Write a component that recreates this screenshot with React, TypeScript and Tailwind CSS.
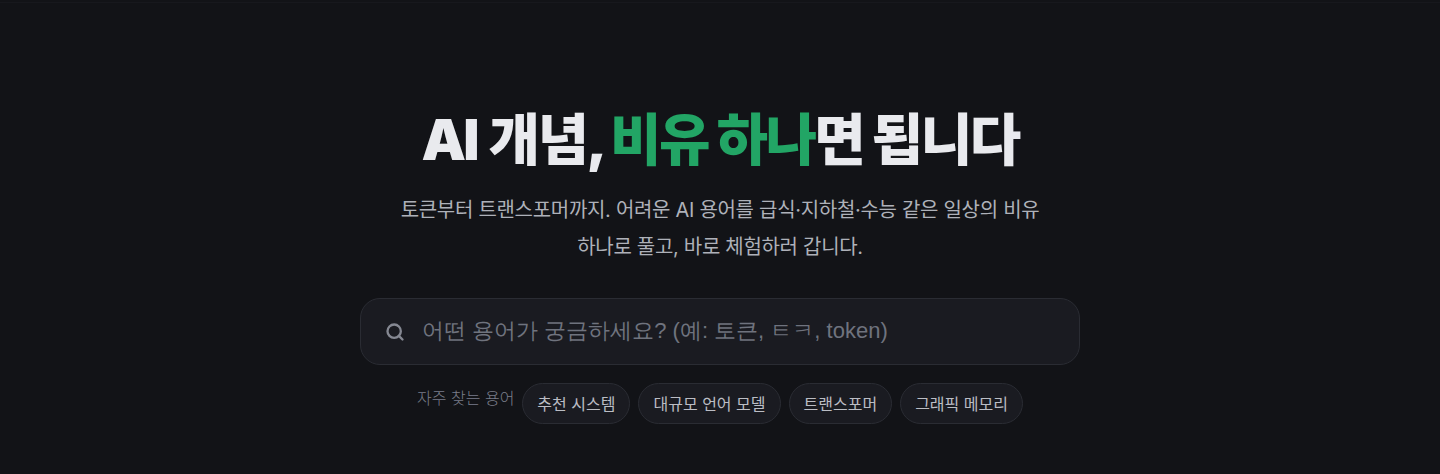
import { Search } from "lucide-react";

const chips = ["추천 시스템", "대규모 언어 모델", "트랜스포머", "그래픽 메모리"];
const font = "font-['Inter','Noto_Sans_CJK_KR',sans-serif]";

export default function App() {
  return (
    <div className={`h-[474px] overflow-hidden bg-[#121317] ${font}`}>
      <div className="h-[3px] bg-[#121317] border-b border-[#17181d]" />
      <main className="flex flex-col items-center pt-[103px]">
        <h1 className="text-[56px] leading-[68px] font-black tracking-[-2.6px] text-[#e9eaee]">
          <span className="mr-[3px]">AI</span> 개념, <span className="text-[#22a565]">비유 하나</span>면 됩니다
        </h1>
        <p className="mt-[18px] w-[700px] text-center text-[20px] leading-[37px] text-[#aeb1b9] tracking-[-0.3px]">
          토큰부터 트랜스포머까지. 어려운 AI 용어를 급식·지하철·수능 같은 일상의 비유
          <br />
          하나로 풀고, 바로 체험하러 갑니다.
        </p>
        <div className="mt-[32px] flex h-[67px] w-[720px] items-center gap-[17px] rounded-[20px] border border-[#2a2c33] bg-[#1a1b21] px-[24px]">
          <Search className="h-[20px] w-[20px] text-[#858892]" strokeWidth={2.8} />
          <input
            readOnly
            placeholder="어떤 용어가 궁금하세요? (예: 토큰, ㅌㅋ, token)"
            className="mb-[2px] flex-1 bg-transparent font-['Liberation_Sans',sans-serif] text-[22px] outline-none placeholder:text-[#6f737e]"
          />
        </div>
        <div className="mt-[18px] flex items-center gap-[8px]">
          <span className="mb-[12px] text-[16px] font-light text-[#7a7e8a]">자주 찾는 용어</span>
          {chips.map((c) => (
            <span key={c} className="flex h-[41px] items-center rounded-full border border-[#2a2c33] bg-[#1a1b21] px-[14px] text-[16px] text-[#bbbdc4]">
              {c}
            </span>
          ))}
        </div>
      </main>
    </div>
  );
}
